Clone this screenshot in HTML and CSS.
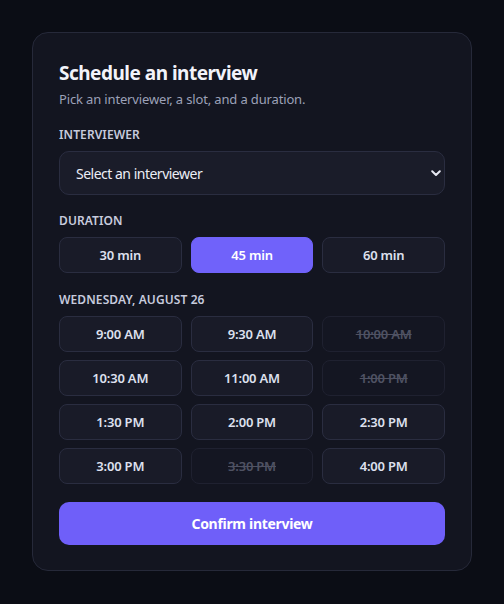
FILE: index.html
```html
<!DOCTYPE html>
<html>
<head>
<meta charset="utf-8">
<link rel="stylesheet" href="styles.css">
</head>
<body>
<div class="card">
  <h1 class="title">Schedule an interview</h1>
  <p class="sub">Pick an interviewer, a slot, and a duration.</p>

  <div class="label">Interviewer</div>
  <div class="select-wrap">
    <select class="select"><option>Select an interviewer</option></select>
    <svg class="chev" width="10" height="7" viewBox="0 0 10 7"><path d="M1.2 1.3 L5 5 L8.8 1.3" fill="none" stroke="#e6e8f2" stroke-width="2" stroke-linecap="round" stroke-linejoin="round"/></svg>
  </div>

  <div class="label">Duration</div>
  <div class="grid">
    <button class="btn">30 min</button>
    <button class="btn active">45 min</button>
    <button class="btn">60 min</button>
  </div>

  <div class="label date">Wednesday, August 26</div>
  <div class="grid slots">
    <button class="btn">9:00 AM</button>
    <button class="btn">9:30 AM</button>
    <button class="btn off">10:00 AM</button>
    <button class="btn">10:30 AM</button>
    <button class="btn">11:00 AM</button>
    <button class="btn off">1:00 PM</button>
    <button class="btn">1:30 PM</button>
    <button class="btn">2:00 PM</button>
    <button class="btn">2:30 PM</button>
    <button class="btn">3:00 PM</button>
    <button class="btn off">3:30 PM</button>
    <button class="btn">4:00 PM</button>
  </div>

  <button class="confirm">Confirm interview</button>
</div>
</body>
</html>
```
FILE: styles.css
```css
* { box-sizing: border-box; }
html, body { margin: 0; padding: 0; }
body {
  background: #0b0d15;
  font-family: "Noto Sans", "Open Sans", sans-serif;
  color: #e8eaf4;
  padding: 32px;
  min-height: 604px;
}
.card {
  width: 440px;
  background: #131520;
  border: 1px solid #262939;
  border-radius: 16px;
  padding: 26px 26px 25px 26px;
}
.title {
  margin: 0;
  font-size: 19px;
  font-weight: 700;
  line-height: 28px;
  letter-spacing: -0.5px;
  color: #f2f3fa;
}
.sub {
  margin: 2px 0 0;
  font-size: 13px;
  line-height: 20px;
  letter-spacing: -0.15px;
  color: #9ca1b8;
}
.label {
  margin-top: 18px;
  font-size: 12px;
  font-weight: 600;
  line-height: 16px;
  text-transform: uppercase;
  color: #c7cbdd;
  letter-spacing: 0.1px;
}
.label.date { margin-top: 19px; }
.select-wrap {
  position: relative;
  margin-top: 8px;
}
.select {
  appearance: none;
  -webkit-appearance: none;
  width: 100%;
  height: 44px;
  background: #1a1c29;
  border: 1px solid #2a2d40;
  border-radius: 10px;
  color: #eceef6;
  font-family: inherit;
  font-size: 14px;
  letter-spacing: -0.5px;
  padding: 0 16px;
  outline: none;
}
.chev {
  position: absolute;
  right: 4px;
  top: 19px;
}
.grid {
  margin-top: 8px;
  display: grid;
  grid-template-columns: repeat(3, 1fr);
  gap: 8px 9px;
}
.btn {
  height: 36px;
  background: #191b28;
  border: 1px solid #2a2d40;
  border-radius: 8px;
  color: #dde0ee;
  font-family: inherit;
  font-size: 13px;
  font-weight: 600;
  letter-spacing: -0.2px;
  padding: 0;
}
.btn.active {
  background: #7062fa;
  border-color: #7062fa;
  color: #ffffff;
}
.btn.off {
  background: #141622;
  border-color: #1f2130;
  color: #4f5263;
  text-decoration: line-through;
}
.confirm {
  margin-top: 18px;
  width: 100%;
  height: 43px;
  background: #6f5ff9;
  border: none;
  border-radius: 10px;
  color: #ffffff;
  font-family: inherit;
  font-size: 14px;
  font-weight: 700;
  letter-spacing: -0.3px;
}
```
